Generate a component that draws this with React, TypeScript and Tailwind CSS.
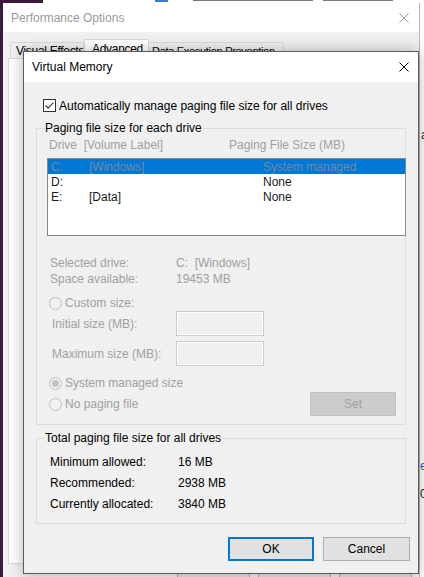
import React from "react";

function XIcon({ color }: { color: string }) {
  return (
    <svg width="10" height="10" viewBox="0 0 10 10" className="shrink-0">
      <path d="M0.5 0.5 L9.5 9.5 M9.5 0.5 L0.5 9.5" stroke={color} strokeWidth="1" fill="none" />
    </svg>
  );
}

function Radio({ checked }: { checked?: boolean }) {
  return (
    <span className="w-[13px] h-[13px] rounded-full border border-[#bcbcbc] bg-[#f0f0f0] flex items-center justify-center shrink-0">
      {checked && <span className="w-[7px] h-[7px] rounded-full bg-[#c2c2c2]" />}
    </span>
  );
}

function TextBox() {
  return <div className="w-[88px] h-[25px] border border-[#cccccc] bg-[#f0f0f0] shadow-[inset_0_0_0_1px_#ffffff]" />;
}

export default function App() {
  return (
    <div className="relative w-[424px] h-[577px] overflow-hidden bg-[#3b1a3d] font-['Liberation_Sans',Arial,sans-serif] text-[12px] leading-[16px] text-black">
      {/* desktop fragments */}
      <div className="absolute left-[43px] top-0 w-[381px] h-[3px] bg-white">
        <div className="absolute left-[112px] top-0 w-[13px] h-[2px] bg-[#3a7bd5]" />
        <div className="absolute left-[150px] top-0 w-[120px] h-[1px] bg-[#777]" />
        <div className="absolute left-[280px] top-0 w-[70px] h-[1px] bg-[#777]" />
      </div>
      <div className="absolute left-[420px] top-[3px] w-[4px] h-[574px] bg-white overflow-hidden">
        <span className="absolute left-[1px] top-[124px] text-[12px] text-[#222]">a</span>
        <span className="absolute left-[0px] top-[455px] text-[12px] text-[#1e5fb4]">e</span>
        <span className="absolute left-[0px] top-[483px] text-[12px] text-[#222]">0</span>
      </div>

      {/* Performance Options window (behind) */}
      <div className="absolute left-[3px] top-[3px] w-[417px] h-[580px] bg-[#f0f0f0] border-r border-[#b5b5b5] flex flex-col">
        <div className="h-[29px] bg-white flex items-center justify-between pl-[8px] pr-[10px] shrink-0">
          <span className="text-[#999999]">Performance Options</span>
          <XIcon color="#999999" />
        </div>
        <div className="flex items-end h-[19px] mt-[7px] pl-[7px] shrink-0 whitespace-nowrap tracking-[-0.3px]">
          <div className="w-[74px] h-[16px] border border-b-0 border-[#d9d9d9] bg-[#f0f0f0] pl-[5px] flex items-center overflow-hidden">
            Visual Effects
          </div>
          <div className="w-[65px] h-[19px] border border-b-0 border-[#d9d9d9] bg-white pl-[7px] pt-[1px] overflow-hidden">
            Advanced
          </div>
          <div className="w-[135px] h-[16px] border border-b-0 border-l-0 border-[#d9d9d9] bg-[#f0f0f0] pl-[3px] flex items-center overflow-hidden text-[11px]">
            Data Execution Prevention
          </div>
        </div>
        <div className="ml-[5px] w-[406px] h-[506px] border border-[#d9d9d9] bg-white shrink-0" />
        <div className="flex justify-end gap-[8px] pr-[7px] mt-[8px] shrink-0">
          <div className="w-[73px] h-[23px] border border-[#adadad] bg-[#e1e1e1]" />
          <div className="w-[73px] h-[23px] border border-[#adadad] bg-[#e1e1e1]" />
          <div className="w-[73px] h-[23px] border border-[#adadad] bg-[#e1e1e1]" />
        </div>
      </div>

      {/* Virtual Memory dialog */}
      <div className="absolute left-[23px] top-[51px] w-[396px] h-[523px] border border-[#5a5a5a] bg-[#f0f0f0] shadow-[0_0_14px_rgba(0,0,0,0.28)] flex flex-col">
        <div className="h-[30px] bg-white flex items-center justify-between pl-[8px] pr-[9px] shrink-0">
          <span>Virtual Memory</span>
          <XIcon color="#000000" />
        </div>

        {/* checkbox */}
        <div className="mt-[17px] pl-[19px] h-[13px] flex items-center gap-[3px]">
          <span className="w-[13px] h-[13px] border border-[#333333] bg-white flex items-center justify-center shrink-0">
            <svg width="11" height="11" viewBox="0 0 11 11">
              <path d="M1.5 5.5 L4.2 8.2 L9.5 2.5" stroke="#333333" strokeWidth="1.1" fill="none" />
            </svg>
          </span>
          <span className="whitespace-nowrap">Automatically manage paging file size for all drives</span>
        </div>

        {/* group 1 */}
        <div className="relative mt-[16px] mx-[12px] border border-[#dcdcdc] flex flex-col pb-[8px]">
          <span className="absolute left-[7px] -top-[9px] px-[1px] bg-[#f0f0f0] whitespace-nowrap">Paging file size for each drive</span>
          <div className="mt-[8px] h-[16px] flex text-[#a0a0a0] whitespace-pre">
            <span className="w-[192px] pl-[12px]">Drive  [Volume Label]</span>
            <span>Paging File Size (MB)</span>
          </div>
          <div className="mt-[5px] ml-[10px] w-[359px] h-[78px] border border-[#828790] bg-white flex flex-col">
            <div className="h-[15px] bg-[#0078d7] flex items-center pl-[3px] text-[#7388a0]">
              <span className="w-[38px]">C:</span>
              <span className="w-[174px]">[Windows]</span>
              <span>System managed</span>
            </div>
            <div className="h-[15px] flex items-center pl-[3px] text-[#1a1a1a]">
              <span className="w-[38px]">D:</span>
              <span className="w-[174px]"></span>
              <span>None</span>
            </div>
            <div className="h-[15px] flex items-center pl-[3px] text-[#1a1a1a]">
              <span className="w-[38px]">E:</span>
              <span className="w-[174px]">[Data]</span>
              <span>None</span>
            </div>
          </div>
          <div className="mt-[19px] h-[16px] flex text-[#a0a0a0] whitespace-pre">
            <span className="w-[139px] pl-[13px]">Selected drive:</span>
            <span>C:  [Windows]</span>
          </div>
          <div className="h-[16px] flex text-[#a0a0a0]">
            <span className="w-[139px] pl-[13px]">Space available:</span>
            <span>19453 MB</span>
          </div>
          <div className="mt-[8px] h-[16px] pl-[12px] flex items-center gap-[3px] text-[#a0a0a0]">
            <Radio />
            <span>Custom size:</span>
          </div>
          <div className="h-[25px] flex items-center text-[#a0a0a0]">
            <span className="w-[139px] pl-[15px]">Initial size (MB):</span>
            <TextBox />
          </div>
          <div className="mt-[5px] h-[25px] flex items-center text-[#a0a0a0]">
            <span className="w-[139px] pl-[15px]">Maximum size (MB):</span>
            <TextBox />
          </div>
          <div className="mt-[9px] h-[16px] pl-[12px] flex items-center gap-[3px] text-[#a0a0a0]">
            <Radio checked />
            <span>System managed size</span>
          </div>
          <div className="mt-[1px] h-[24px] pl-[12px] pr-[9px] flex items-center justify-between text-[#a0a0a0]">
            <div className="flex items-center gap-[3px]">
              <Radio />
              <span>No paging file</span>
            </div>
            <div className="w-[86px] h-[24px] border border-[#bfbfbf] bg-[#cccccc] flex items-center justify-center">
              Set
            </div>
          </div>
        </div>

        {/* group 2 */}
        <div className="relative mt-[13px] mx-[12px] border border-[#dcdcdc] flex flex-col pt-[12px] pb-[9px]">
          <span className="absolute left-[7px] -top-[9px] px-[1px] bg-[#f0f0f0] whitespace-nowrap">Total paging file size for all drives</span>
          <div className="h-[21px] flex items-center">
            <span className="w-[141px] pl-[13px]">Minimum allowed:</span>
            <span>16 MB</span>
          </div>
          <div className="h-[21px] flex items-center">
            <span className="w-[141px] pl-[13px]">Recommended:</span>
            <span>2938 MB</span>
          </div>
          <div className="h-[21px] flex items-center">
            <span className="w-[141px] pl-[13px]">Currently allocated:</span>
            <span>3840 MB</span>
          </div>
        </div>

        {/* buttons */}
        <div className="mt-[13px] pr-[8px] flex justify-end gap-[9px]">
          <div className="w-[86px] h-[24px] border-2 border-[#0078d7] bg-[#e1e1e1] flex items-center justify-center">OK</div>
          <div className="w-[87px] h-[24px] border border-[#adadad] bg-[#e1e1e1] flex items-center justify-center">Cancel</div>
        </div>
      </div>
    </div>
  );
}
